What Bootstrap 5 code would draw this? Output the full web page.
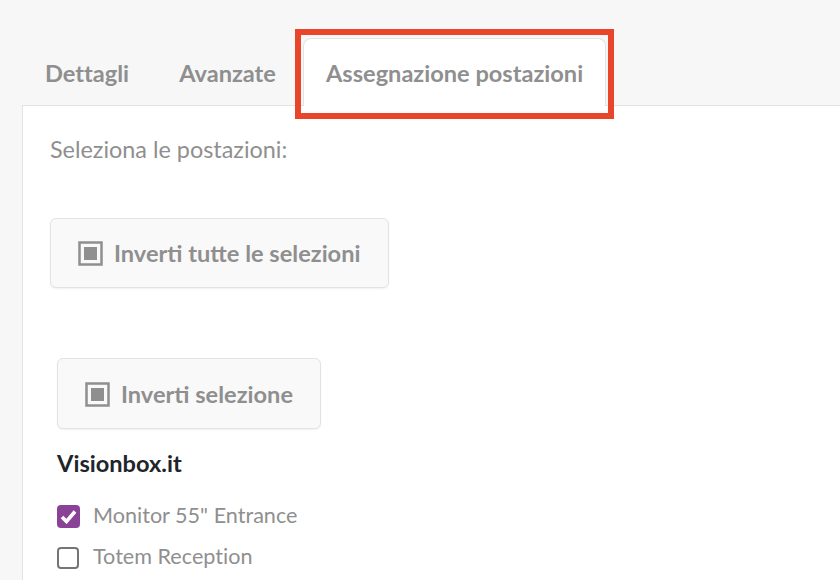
<!DOCTYPE html>
<html lang="it">
<head>
  <meta charset="UTF-8">
  <meta name="viewport" content="width=device-width, initial-scale=1">
  <title>Assegnazione postazioni</title>
  <link href="https://cdn.jsdelivr.net/npm/bootstrap@5.3.2/dist/css/bootstrap.min.css" rel="stylesheet">
  <style>
    html, body { height: 580px; overflow: hidden; }
    body { background: #f7f7f7; font-family: Lato, "Liberation Sans", sans-serif; color: #8f8f8f; font-size: 23.5px; font-variant-ligatures: none; }
    .page-wrap { padding: 38px 0 0 22px; }
    .tab-bar { border: 0; margin: 0; padding: 0; gap: 0; height: 68px; position: relative; z-index: 1; }
    .tab-bar .nav-link { color: #8f8f8f; font-weight: 700; font-size: 23.6px; line-height: 28px; border: 1px solid transparent; border-bottom: 0; border-radius: 8px 8px 0 0; height: 68px; padding: 20px 26px 0 22px; background: none; }
    .tab-bar .nav-link.active { color: #8f8f8f; background: #fff; border-color: #e3e3e3; margin-left: 0; padding-left: 22px; padding-right: 22px; }
    .tab-panel { background: #fff; border: 1px solid #e3e3e3; border-right: 0; margin-top: -1px; height: 500px; padding: 25px 27px 0; }
    .intro { font-size: 23.4px; line-height: 36px; margin: 0; }
    .btn-invert { display: inline-flex; align-items: center; gap: 11px; background: #f9f9f9; border: 1px solid #e3e3e3; border-radius: 6px; box-shadow: 0 1px 2px rgba(0,0,0,.06); color: #8f8f8f; font-weight: 700; font-size: 23.6px; height: 71px; padding: 2px 27px 0 27px; }
    .btn-invert:hover { background: #f9f9f9; color: #8f8f8f; border-color: #e3e3e3; }
    .btn-all { margin-top: 51px; height: 70px; padding-top: 1px; padding-right: 28px; }
    .group-wrap { margin: 70px 0 0 7px; }
    .group-name { color: #212529; font-weight: 700; font-size: 23.6px; line-height: 28px; margin: 20px 0 26px; }
    .seat { display: flex; align-items: center; gap: 13px; height: 24px; margin-bottom: 17px; font-size: 21.6px; }
    .seat-box { width: 23px; height: 23px; border-radius: 4px; flex: none; display: flex; align-items: center; justify-content: center; margin-top: 3px; }
    .seat-box.on { background: #8a4296; }
    .seat-box.off { border: 2px solid #757575; background: #fff; width: 22px; height: 22px; margin-right: 1px; }
    .mark-box { position: absolute; left: 295px; top: 29px; width: 319px; height: 90px; border: 6px solid #e8452a; z-index: 2; }
  </style>
</head>
<body>
  <div class="page-wrap">
    <ul class="nav nav-tabs tab-bar">
      <li class="nav-item"><a class="nav-link" href="#">Dettagli</a></li>
      <li class="nav-item"><a class="nav-link" href="#">Avanzate</a></li>
      <li class="nav-item"><a class="nav-link active" href="#">Assegnazione postazioni</a></li>
    </ul>
    <div class="tab-panel">
      <p class="intro">Seleziona le postazioni:</p>
      <button type="button" class="btn btn-invert btn-all">
        <svg width="25" height="25" viewBox="0 0 25 25"><rect x="1.5" y="1.5" width="22" height="22" fill="none" stroke="#8f8f8f" stroke-width="2.5"/><rect x="6" y="6" width="13" height="13" fill="#8f8f8f"/></svg>
        Inverti tutte le selezioni
      </button>
      <div class="group-wrap">
        <button type="button" class="btn btn-invert">
          <svg width="25" height="25" viewBox="0 0 25 25"><rect x="1.5" y="1.5" width="22" height="22" fill="none" stroke="#8f8f8f" stroke-width="2.5"/><rect x="6" y="6" width="13" height="13" fill="#8f8f8f"/></svg>
          Inverti selezione
        </button>
        <div class="group-name">Visionbox.it</div>
        <div class="seat">
          <span class="seat-box on"><svg width="17" height="15" viewBox="0 0 17 15"><path d="M2 8l4.5 4.5L15 2.5" fill="none" stroke="#fff" stroke-width="3.6"/></svg></span>
          Monitor 55" Entrance
        </div>
        <div class="seat">
          <span class="seat-box off"></span>
          Totem Reception
        </div>
      </div>
    </div>
  </div>
  <div class="mark-box"></div>
  <script src="https://cdn.jsdelivr.net/npm/bootstrap@5.3.2/dist/js/bootstrap.bundle.min.js"></script>
</body>
</html>
